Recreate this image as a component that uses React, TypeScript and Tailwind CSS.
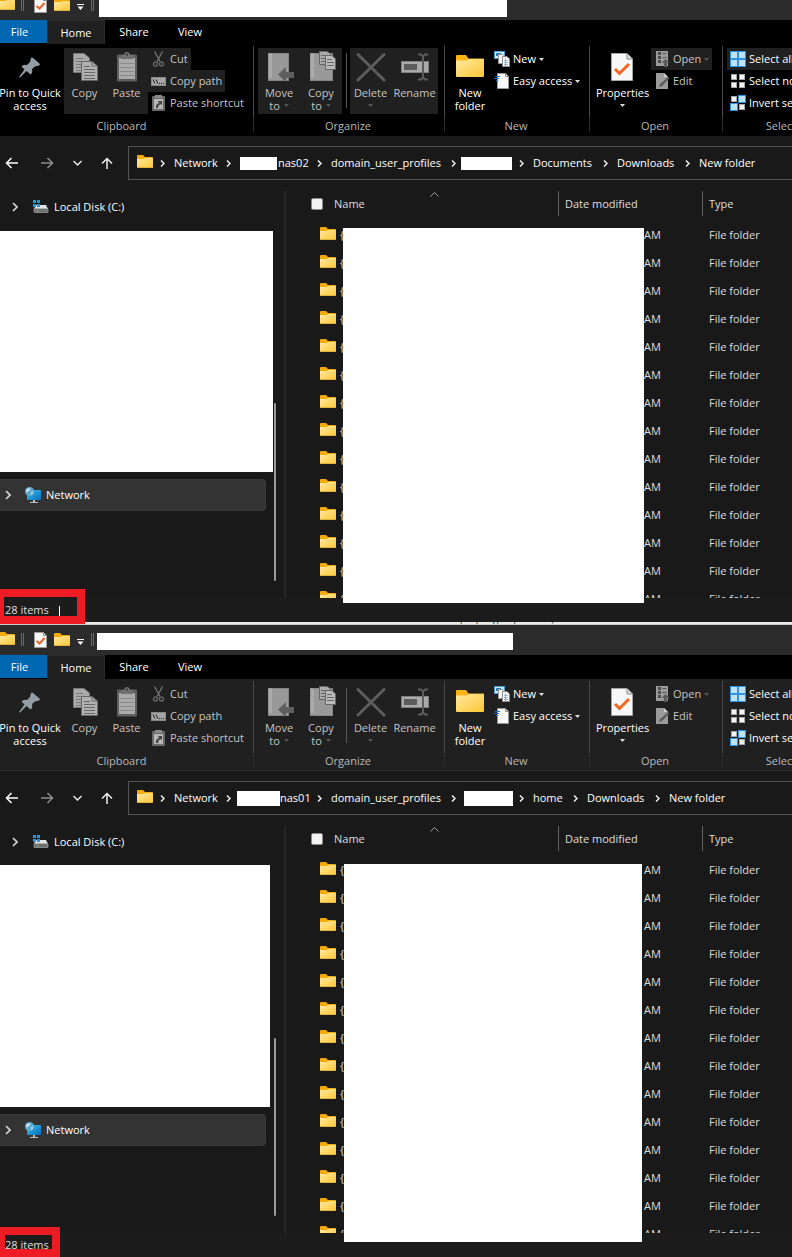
import { ReactNode } from "react";
import clsx from "clsx";

interface Crumb {
  label: string;
  width: string;
  redacted?: string;
}

interface ExplorerProps {
  id: string;
  focused?: boolean;
  titleClass: string;
  titleRedaction: string;
  crumbs: Crumb[];
  sideRedaction: string;
  listRedaction: string;
  statusMark: string;
  showDivider?: boolean;
}

const FolderIcon = ({ className }: { className?: string }) => (
  <svg className={clsx("shrink-0", className)} width="16" height="13" viewBox="0 0 16 13">
    <path d="M0 1Q0 0 1 0H6L8 2H15Q16 2 16 3V7H0Z" fill="#f3ab0c" />
    <path d="M0 4H6.5L8.5 3H16V12Q16 13 15 13H1Q0 13 0 12Z" fill="url(#folderFill)" />
    <path d="M0.5 12.5H15.5" stroke="#e6b13c" />
  </svg>
);

const BigFolderIcon = () => (
  <svg width="32" height="32" viewBox="0 0 32 32">
    <path d="M2 5Q2 4 3 4H12L14.500 7.500H29Q30 7.500 30 8.500V14H2Z" fill="#fab416" />
    <path d="M2 9.500H12L15 8H30V25Q30 26 29 26H3Q2 26 2 25Z" fill="url(#folderFill)" />
  </svg>
);

const PinIcon = () => (
  <svg width="32" height="32" viewBox="0 0 32 32">
    <path
      d="M17 7Q18 6 19 7L25.500 12.500Q26.500 14 25 14.500L21 15.500L18 18Q19 22 16.500 23.500L12.500 20L6 26.500L5 26L10.500 18.500L7.500 15.500Q9.500 13 13 14L16 11Z"
      fill="#929da5"
    />
  </svg>
);

const CopyIcon = () => (
  <svg width="32" height="32" viewBox="0 0 32 32">
    <path d="M4.500 2.500H15L20.500 7V21.500H4.500Z" fill="#aaa" stroke="#777" />
    <path d="M7 7.500H14M7 10.500H17M7 13.500H17M7 16.500H17M7 19.500H15" stroke="#777" />
    <path d="M12.500 10.500H23L28.500 15V29.500H12.500Z" fill="#b0b0b0" stroke="#666" />
    <path d="M23 10.500V15H28.500M15 15.500H21M15 18.500H26M15 21.500H26M15 24.500H26M15 27.500H26" stroke="#666" fill="none" />
  </svg>
);

const PasteIcon = () => (
  <svg width="32" height="32" viewBox="0 0 32 32">
    <rect x="6" y="3.500" width="20" height="27" rx="1" fill="#5f5f5f" />
    <rect x="8" y="7" width="16" height="21" fill="#aaa" />
    <path d="M9 12.500H23M9 16.500H23M9 20.500H23M9 24.500H23" stroke="#8a8a8a" />
    <path d="M10 4H13Q13.500 1 16 1Q18.500 1 19 4H22V8H10Z" fill="#707070" />
    <circle cx="16" cy="3.500" r="1" fill="#333" />
  </svg>
);

const MoveIcon = () => (
  <svg width="32" height="32" viewBox="0 0 32 32">
    <rect x="5.500" y="2.500" width="20" height="27" fill="#999" stroke="#858585" />
    <path d="M5.500 2.500H9V27H5.500Z" fill="#aaa" />
    <path d="M15 23.500L23 16V21H31V27H23V31Z" fill="#5e5e5e" />
  </svg>
);

const CopyToIcon = () => (
  <svg width="32" height="32" viewBox="0 0 32 32">
    <rect x="5.500" y="2.500" width="22" height="27" fill="#999" stroke="#858585" />
    <path d="M5.500 2.500H9V27H5.500Z" fill="#aaa" />
    <path d="M14.500 0.500H22L26 3V13.500H14.500Z" fill="#aaa" stroke="#666" />
    <path d="M16 4.500H22M16 7.500H21M16 10.500H21" stroke="#666" />
    <path d="M20.500 4.500H27L30.500 8V18.500H20.500Z" fill="#bbb" stroke="#666" />
    <path d="M22 8.500H27M22 11.500H29M22 14.500H29" stroke="#666" />
  </svg>
);

const DeleteIcon = () => (
  <svg width="32" height="32" viewBox="0 0 32 32">
    <path d="M3 3.500L29 29M29 3.500L3 29" stroke="#5d5d5d" strokeWidth="3" strokeLinecap="round" />
  </svg>
);

const RenameIcon = () => (
  <svg width="32" height="32" viewBox="0 0 32 32">
    <rect x="2.500" y="10.500" width="27" height="11" fill="#aaa" stroke="#808080" />
    <rect x="5" y="13" width="13" height="6" fill="#5c5c5c" />
    <path d="M19 3.500H22L24 5.500L26 3.500H29M24 5V27M19 28.500H22L24 26.500L26 28.500H29" stroke="#5c5c5c" strokeWidth="2" fill="none" />
  </svg>
);

const PropertiesIcon = () => (
  <svg width="32" height="32" viewBox="0 0 32 32">
    <path d="M4.500 2.500H20L25.500 8V29.500H4.500Z" fill="#f7f7f7" stroke="#a3a3a3" />
    <path d="M20 2.500V8H25.500" fill="#ddd" stroke="#8f8f8f" />
    <path d="M8 18L12.500 22.500L22 13" stroke="#f26522" strokeWidth="3" fill="none" />
  </svg>
);

const CheckedPageIcon = () => (
  <svg className="shrink-0" width="13" height="16" viewBox="0 0 13 16">
    <path d="M0.500 0.500H9.500L12.500 3.500V15.500H0.500Z" fill="#f7f7f7" stroke="#9a9a9a" />
    <path d="M9.500 0.500V3.500H12.500" fill="none" stroke="#888" />
    <path d="M2.500 9L5.500 11.500L10.500 6" stroke="#e8632c" strokeWidth="2" fill="none" />
  </svg>
);

const CutIcon = () => (
  <svg width="16" height="16" viewBox="0 0 16 16">
    <path d="M3.500 0.500L9 10.500M11.500 0.500L6 10.500" stroke="#777" strokeWidth="1.300" />
    <circle cx="4.500" cy="13" r="2" fill="none" stroke="#626262" strokeWidth="1.500" />
    <circle cx="10.500" cy="13" r="2" fill="none" stroke="#626262" strokeWidth="1.500" />
  </svg>
);

const CopyPathIcon = () => (
  <svg width="16" height="16" viewBox="0 0 16 16">
    <rect x="0.500" y="4.500" width="14" height="8" fill="#a5a5a5" stroke="#888" />
    <path d="M2 6.500L4 10.500M5 6.500L7 10.500M8 10.500H9M10 10.500H11M12 10.500H13" stroke="#222" />
  </svg>
);

const PasteShortcutIcon = () => (
  <svg width="16" height="16" viewBox="0 0 16 16">
    <rect x="1" y="1" width="13" height="15" rx="1" fill="#6a6a6a" />
    <rect x="3" y="4" width="9" height="10" fill="#b5b5b5" />
    <rect x="4" y="0" width="7" height="3" fill="#8a8a8a" />
    <path d="M5 13Q4.500 9 8 8L7 6H11V10L9.500 9Q7 10 7 13Z" fill="#444" />
  </svg>
);

const NewItemIcon = () => (
  <svg width="16" height="16" viewBox="0 0 16 16">
    <rect x="0.500" y="0.500" width="10" height="7" fill="#cfe8f7" stroke="#4b9ac9" />
    <rect x="2" y="2" width="5" height="3" fill="#2f7fb5" />
    <path d="M4.500 3.500H9L11.500 6V12.500H4.500Z" fill="#f4f4f4" stroke="#999" />
    <path d="M8.500 5.500H13L15.500 8V15.500H8.500Z" fill="#fff" stroke="#8c8c8c" />
    <path d="M10 9.500H14M10 11.500H14M10 13.500H14" stroke="#9bb7d8" />
    <path d="M11.500 7V15" stroke="#e58f8f" />
  </svg>
);

const EasyAccessIcon = () => (
  <svg width="16" height="16" viewBox="0 0 16 16">
    <path d="M3.500 0.500H11.500L14.500 3.500V15.500H3.500Z" fill="#f7f7f7" stroke="#999" />
    <path d="M11.500 0.500V3.500H14.500" fill="none" stroke="#888" />
    <path d="M1 3.500H6M0 5.500H5M2 7.500H4" stroke="#1c6fb8" strokeWidth="1.200" />
  </svg>
);

const OpenIcon = () => (
  <svg width="16" height="16" viewBox="0 0 16 16">
    <rect x="2" y="0" width="12" height="15" fill="#9b9b9b" />
    <path d="M4 2.500H7M4 6.500H7M4 10.500H7" stroke="#4c4c4c" strokeWidth="3" />
    <path d="M8.500 2.500H12.500M8.500 6.500H12.500" stroke="#555" />
    <path d="M11.500 8L15.500 12H13V16H10V12H7.500Z" fill="#5a5a5a" />
  </svg>
);

const EditIcon = () => (
  <svg width="16" height="16" viewBox="0 0 16 16">
    <path d="M2 0H10L14 4V16H2Z" fill="#9b9b9b" />
    <path d="M10 0V4H14" fill="#ccc" />
    <path d="M5 14L6 11L14 4L15.500 5.500L8 13Z" fill="#5c5c5c" />
  </svg>
);

const SelectIcon = ({ blue }: { blue: boolean[] }) => (
  <svg width="16" height="16" viewBox="0 0 16 16">
    {blue.map((isBlue, i) => {
      const x = (i % 2) * 8;
      const y = Math.floor(i / 2) * 8;
      return isBlue ? (
        <g key={i}>
          <rect x={x} y={y} width="8" height="8" fill="#2f93e0" />
          <rect x={x + 1} y={y + 1} width="6" height="6" fill="#bfe2fb" />
        </g>
      ) : (
        <rect key={i} x={x + 1.5} y={y + 1.5} width="5" height="5" fill="#f4f4f4" stroke="#a8a8a8" />
      );
    })}
  </svg>
);

const DiskIcon = () => (
  <svg className="shrink-0" width="16" height="14" viewBox="0 0 16 14">
    <path d="M3 5H13L15 9H1Z" fill="#e4e4e4" />
    <rect x="1" y="8.500" width="14" height="4" rx="0.500" fill="#6e6e6e" stroke="#b5b5b5" strokeWidth="0.600" />
    <rect x="4" y="10" width="1.500" height="1.500" fill="#3ce25a" />
    <path d="M0 0H3V3H0ZM4 0H7V3H4ZM0 4H3V7H0ZM4 4H7V7H4Z" fill="#1c9ae6" />
  </svg>
);

const NetworkIcon = () => (
  <svg className="shrink-0" width="16" height="16" viewBox="0 0 16 16">
    <rect x="2" y="3" width="14" height="10" rx="0.500" fill="url(#screenFill)" />
    <path d="M8 13H10V15H13V16H5V15H8Z" fill="#b9c0c5" />
    <circle cx="4.500" cy="4.500" r="4.500" fill="#5fa9d0" />
    <path d="M1 3Q3 0.500 5 1.500Q6 3 3.500 4Q3 6 1.500 5Z" fill="#c6e2ef" />
    <path d="M6 5Q8.500 4 8.500 5Q8 8 6 8Z" fill="#a9d1e6" />
  </svg>
);

const Chevron = () => (
  <svg className="shrink-0" width="6" height="10" viewBox="0 0 6 10">
    <path d="M1 1L5 5L1 9" stroke="#d8d8d8" strokeWidth="1.600" fill="none" />
  </svg>
);

const CrumbChevron = () => (
  <svg className="shrink-0" width="5" height="7" viewBox="0 0 5 7">
    <path d="M1 0.500L4 3.500L1 6.500" stroke="#eee" strokeWidth="1.500" fill="none" />
  </svg>
);

const Caret = ({ dim }: { dim?: boolean }) => (
  <svg className="shrink-0" width="5" height="3" viewBox="0 0 5 3">
    <path d="M0 0H5L2.500 3Z" fill={dim ? "#555" : "#e0e0e0"} />
  </svg>
);

interface BigButtonProps {
  icon: ReactNode;
  width: string;
  disabled?: boolean;
  children: ReactNode;
}

const BigButton = ({ icon, width, disabled, children }: BigButtonProps) => (
  <button
    disabled={disabled}
    className={clsx(
      "flex h-[66px] shrink-0 flex-col items-center gap-[3px] pt-[3px] text-center leading-[13px] whitespace-nowrap",
      width,
      disabled ? "bg-[#202020] text-[#c4c4c4]" : "text-white"
    )}
  >
    {icon}
    <span className="flex flex-col items-center">{children}</span>
  </button>
);

interface SmallButtonProps {
  icon: ReactNode;
  label: string;
  disabled?: boolean;
  highlighted?: boolean;
  caret?: boolean;
}

const SmallButton = ({ icon, label, disabled, highlighted, caret }: SmallButtonProps) => (
  <button
    disabled={disabled}
    className={clsx(
      "flex h-[22px] items-center gap-[3px] px-[3px] whitespace-nowrap",
      highlighted && "bg-[#202020]",
      disabled ? "text-[#c4c4c4]" : "text-white"
    )}
  >
    {icon}
    <span>{label}</span>
    {caret && <Caret dim={disabled} />}
  </button>
);

const RibbonGroup = ({ label, width, children }: { label: string; width: string; children: ReactNode }) => (
  <div className={clsx("flex shrink-0 flex-col", width)}>
    <div className="flex h-[68px] items-start pt-[2px]">{children}</div>
    <p className="mt-[5px] text-center leading-[14px] text-[#b8b8b8]">{label}</p>
  </div>
);

const GroupLine = () => (
  <div className="flex w-px shrink-0 flex-col">
    <div className="h-[72px] bg-[#484848]" />
    <div className="h-[14px] bg-[#2c2c2c]" />
  </div>
);

const Ribbon = ({ focused }: { focused?: boolean }) => (
  <div
    className={clsx(
      "flex h-[92px] overflow-hidden border-b pt-[2px]",
      focused ? "border-black bg-black" : "border-[#2b2b2b] bg-[#202020]"
    )}
  >
    <RibbonGroup label="Clipboard" width="w-[253px] pr-[10px]">
      <BigButton icon={<PinIcon />} width="-ml-1 w-[68px]">
        <span>Pin to Quick</span>
        <span>access</span>
      </BigButton>
      <BigButton icon={<CopyIcon />} width="w-[41px]" disabled>
        Copy
      </BigButton>
      <BigButton icon={<PasteIcon />} width="w-[43px]" disabled>
        Paste
      </BigButton>
      <div className="flex flex-col items-start">
        <SmallButton icon={<CutIcon />} label="Cut" disabled highlighted />
        <SmallButton icon={<CopyPathIcon />} label="Copy path" disabled highlighted />
        <SmallButton icon={<PasteShortcutIcon />} label="Paste shortcut" disabled />
      </div>
    </RibbonGroup>
    <GroupLine />
    <RibbonGroup label="Organize" width="w-[190px] pl-1 pr-[6px]">
      <BigButton icon={<MoveIcon />} width="w-[42px]" disabled>
        <span>Move</span>
        <span className="flex items-center gap-1">
          to <Caret dim />
        </span>
      </BigButton>
      <BigButton icon={<CopyToIcon />} width="w-[42px]" disabled>
        <span>Copy</span>
        <span className="flex items-center gap-1">
          to <Caret dim />
        </span>
      </BigButton>
      <div className="mr-[3px] ml-1 mt-[5px] h-[55px] w-px shrink-0 bg-[#5a5a5a]" />
      <BigButton icon={<DeleteIcon />} width="w-[41px]" disabled>
        <span>Delete</span>
        <span className="flex h-[13px] items-center">
          <Caret dim />
        </span>
      </BigButton>
      <BigButton icon={<RenameIcon />} width="w-[47px]" disabled>
        Rename
      </BigButton>
    </RibbonGroup>
    <GroupLine />
    <RibbonGroup label="New" width="w-[144px] pl-1 pr-[6px]">
      <BigButton icon={<BigFolderIcon />} width="w-[42px]">
        <span>New</span>
        <span>folder</span>
      </BigButton>
      <div className="flex flex-col items-start">
        <SmallButton icon={<NewItemIcon />} label="New" caret />
        <SmallButton icon={<EasyAccessIcon />} label="Easy access" caret />
      </div>
    </RibbonGroup>
    <GroupLine />
    <RibbonGroup label="Open" width="w-[132px] pl-1 pr-[6px]">
      <BigButton icon={<PropertiesIcon />} width="w-[57px]">
        <span>Properties</span>
        <span className="flex h-[13px] items-center">
          <Caret />
        </span>
      </BigButton>
      <div className="flex flex-col items-start">
        <SmallButton icon={<OpenIcon />} label="Open" disabled highlighted caret />
        <SmallButton icon={<EditIcon />} label="Edit" disabled />
      </div>
    </RibbonGroup>
    <GroupLine />
    <RibbonGroup label="Select" width="w-[116px] px-1">
      <div className="flex flex-col items-start">
        <SmallButton icon={<SelectIcon blue={[true, true, true, true]} />} label="Select all" highlighted />
        <SmallButton icon={<SelectIcon blue={[false, false, false, false]} />} label="Select none" />
        <SmallButton icon={<SelectIcon blue={[false, true, true, false]} />} label="Invert selection" />
      </div>
    </RibbonGroup>
  </div>
);

const ToolbarGrip = () => <div className="mb-[2px] h-[13px] w-[3px] shrink-0 border-x border-[#6a6a6a]" />;

const TitleBar = ({ titleClass, titleRedaction }: { titleClass: string; titleRedaction: string }) => (
  <div className={clsx("relative flex items-end overflow-hidden bg-[#2b2b2b] pb-[7px]", titleClass)}>
    <FolderIcon className="mb-[3px] -ml-px" />
    <div className="ml-[6px]">
      <ToolbarGrip />
    </div>
    <button aria-label="Properties" className="ml-[10px]">
      <CheckedPageIcon />
    </button>
    <button aria-label="New folder" className="mb-[2px] ml-[7px]">
      <FolderIcon />
    </button>
    <button aria-label="Customize toolbar" className="mb-[3px] ml-[7px]">
      <svg width="7" height="6" viewBox="0 0 7 6">
        <path d="M0 0.500H7" stroke="#fff" />
        <path d="M0.500 2.500H6.500L3.500 6Z" fill="#fff" />
      </svg>
    </button>
    <div className="ml-[7px]">
      <ToolbarGrip />
    </div>
    <div className={clsx("absolute bg-white", titleRedaction)} />
  </div>
);

const TabStrip = () => (
  <div className="flex h-6 bg-black text-white">
    <button className="mb-px w-[47px] bg-[#0067b3] pr-2">File</button>
    <button className="w-[58px] border-x border-t border-[#2b2b2b] bg-[#202020]">Home</button>
    <button className="w-[58px]">Share</button>
    <button className="w-[54px]">View</button>
  </div>
);

const NavBar = ({ crumbs }: { crumbs: Crumb[] }) => (
  <div className="flex h-[55px] items-start pt-[10px]">
    <div className="flex h-[34px] w-32 shrink-0 items-center pl-[5px]">
      <button aria-label="Back">
        <svg width="14" height="12" viewBox="0 0 14 12">
          <path d="M13 6H1.500M6.500 1L1.500 6L6.500 11" stroke="#fff" strokeWidth="1.500" fill="none" />
        </svg>
      </button>
      <button aria-label="Forward" className="ml-[21px]">
        <svg width="14" height="12" viewBox="0 0 14 12">
          <path d="M1 6H12.500M7.500 1L12.500 6L7.500 11" stroke="#8f8f8f" strokeWidth="1.500" fill="none" />
        </svg>
      </button>
      <button aria-label="Recent locations" className="ml-[19px]">
        <svg width="9" height="6" viewBox="0 0 9 6">
          <path d="M0.500 1L4.500 5L8.500 1" stroke="#e8e8e8" strokeWidth="1.500" fill="none" />
        </svg>
      </button>
      <button aria-label="Up" className="ml-[19px]">
        <svg width="12" height="12" viewBox="0 0 12 12">
          <path d="M6 12V1.500M1 6.500L6 1.500L11 6.500" stroke="#f0f0f0" strokeWidth="1.500" fill="none" />
        </svg>
      </button>
    </div>
    <nav
      aria-label="Address"
      className="flex h-[34px] min-w-0 flex-auto items-center overflow-hidden border border-r-0 border-[#535353] pl-2 text-white"
    >
      <FolderIcon className="mb-[3px]" />
      {crumbs.map((crumb, index) => (
        <div key={index} className={clsx("flex shrink-0 items-center whitespace-nowrap", crumb.width)}>
          <span className="w-[21px] shrink-0 pl-[7px]">
            <CrumbChevron />
          </span>
          {crumb.redacted && <span className={clsx("shrink-0 bg-white", crumb.redacted)} />}
          {crumb.label && <a href="#">{crumb.label}</a>}
        </div>
      ))}
    </nav>
  </div>
);

const Sidebar = ({ redaction }: { redaction: string }) => (
  <aside className="relative flex w-[286px] shrink-0 flex-col border-r-2 border-[#282828] text-white">
    <a href="#" className="flex h-8 items-center pl-3">
      <Chevron />
      <span className="ml-[15px]">
        <DiskIcon />
      </span>
      <span className="ml-[5px]">Local Disk (C:)</span>
    </a>
    <div className={clsx("bg-white", redaction)} />
    <a href="#" className="mt-[7px] flex h-8 w-[266px] items-center rounded-r-sm border border-l-0 border-[#3a3a3a] bg-[#333] pl-[5px]">
      <Chevron />
      <span className="ml-[14px]">
        <NetworkIcon />
      </span>
      <span className="ml-[5px]">Network</span>
    </a>
    <div className="absolute top-[212px] right-[8px] h-[178px] w-[2px] rounded-full bg-[#9a9a9a]" />
  </aside>
);

const FileList = ({ id }: { id: string }) => (
  <div className="relative min-w-0 flex-auto overflow-hidden text-[#dedede]">
    <table className="w-full table-fixed border-separate border-spacing-0 text-left">
      <thead>
        <tr className="h-[25px]">
          <th className="w-[273px] border-r border-[#636363] p-0 font-normal">
            <div className="relative flex items-center pl-[25px]">
              <input
                type="checkbox"
                id={`${id}-all`}
                aria-label="Select all items"
                className="h-3 w-3 appearance-none rounded-xs border border-[#8a8a8a] bg-[#f3f3f3]"
              />
              <label htmlFor={`${id}-all`} className="ml-[11px]">
                Name
              </label>
              <svg className="absolute -top-[4px] left-[144px]" width="9" height="5" viewBox="0 0 9 5">
                <path d="M0.500 4.500L4.500 0.500L8.500 4.500" stroke="#a0a0a0" fill="none" />
              </svg>
            </div>
          </th>
          <th className="w-[144px] border-r border-[#636363] p-0 pl-[6px] font-normal">Date modified</th>
          <th className="p-0 pl-[6px] font-normal">Type</th>
        </tr>
      </thead>
      <tbody>
        <tr className="h-[5px]" />
        {Array.from({ length: 14 }, (_, index) => (
          <tr key={index} className="h-7">
            <td className="p-0 pl-[34px]">
              <span className="flex items-center gap-1">
                <FolderIcon className="mb-[3px]" />
                {"{"}
              </span>
            </td>
            <td className="p-0 pl-[85px]">AM</td>
            <td className="p-0 pl-[6px]">File folder</td>
          </tr>
        ))}
      </tbody>
    </table>
  </div>
);

const ExplorerWindow = (props: ExplorerProps) => {
  return (
    <section className="relative bg-[#191919]">
      <TitleBar titleClass={props.titleClass} titleRedaction={props.titleRedaction} />
      <TabStrip />
      <Ribbon focused={props.focused} />
      <NavBar crumbs={props.crumbs} />
      <div className="relative z-10">
        <div className="flex h-[407px] overflow-hidden">
          <Sidebar redaction={props.sideRedaction} />
          <FileList id={props.id} />
        </div>
        <div className={clsx("absolute bg-white", props.listRedaction)} />
      </div>
      <footer className="relative flex h-6 items-center bg-[#1c1c1c] pl-[5px] text-[#dedede]">
        28 items
        {props.showDivider && <span className="mt-1 ml-[10px] h-3 w-px bg-white" />}
        <div className={clsx("absolute z-20 border-8 border-[#ed1c24]", props.statusMark)} />
      </footer>
    </section>
  );
};

const App = () => {
  return (
    <main className="min-h-screen overflow-hidden bg-[#191919] font-['Open_Sans','Noto_Sans',sans-serif] text-[11px] leading-4">
      <svg className="absolute h-0 w-0" aria-hidden="true">
        <defs>
          <linearGradient id="folderFill" x1="0" y1="0" x2="1" y2="1">
            <stop offset="0" stopColor="#ffe9a0" />
            <stop offset="1" stopColor="#fdc735" />
          </linearGradient>
          <linearGradient id="screenFill" x1="0" y1="0" x2="1" y2="1">
            <stop offset="0" stopColor="#2fc3ea" />
            <stop offset="1" stopColor="#0f6cbd" />
          </linearGradient>
        </defs>
      </svg>
      <ExplorerWindow
        id="nas02"
        focused
        titleClass="h-5"
        titleRedaction="top-0 bottom-[3px] left-[99px] w-[408px]"
        crumbs={[
          { label: "Network", width: "w-[66px]" },
          { label: "nas02", width: "w-[91px]", redacted: "mr-px h-[13px] w-[37px]" },
          { label: "domain_user_profiles", width: "w-[134px]" },
          { label: "", width: "w-[68px]", redacted: "-ml-1 h-[13px] w-[51px]" },
          { label: "Documents", width: "w-[84px]" },
          { label: "Downloads", width: "w-[82px]" },
          { label: "New folder", width: "w-[90px]" },
        ]}
        sideRedaction="mt-2 h-[241px] w-[273px]"
        listRedaction="top-[37px] -bottom-[5px] left-[343px] w-[301px]"
        statusMark="-top-[9px] -bottom-[2px] -left-1 w-[89px]"
        showDivider
      />
      {/* sliver of the window behind */}
      <div className="flex h-[3px] items-end overflow-hidden border-b border-[#c8c8c8] bg-[#ececec] pb-px pl-[410px] text-[10px] leading-[9px] whitespace-nowrap text-[#333]">
        <span className="w-[200px] shrink-0">Domain Laptop logon policies (Premium</span>
        <span className="w-[147px] shrink-0">Enabled</span>
        <span>None</span>
      </div>
      <ExplorerWindow
        id="nas01"
        titleClass="h-[30px]"
        titleRedaction="top-2 bottom-[5px] left-[97px] w-[416px]"
        crumbs={[
          { label: "Network", width: "w-[66px]" },
          { label: "nas01", width: "w-[91px]", redacted: "-ml-[3px] h-[15px] w-[43px]" },
          { label: "domain_user_profiles", width: "w-[134px]" },
          { label: "", width: "w-[68px]", redacted: "-ml-px h-[15px] w-[49px]" },
          { label: "home", width: "w-[54px]" },
          { label: "Downloads", width: "w-[82px]" },
          { label: "New folder", width: "w-[90px]" },
        ]}
        sideRedaction="mt-[7px] h-[242px] w-[270px]"
        listRedaction="top-[38px] -bottom-[9px] left-[344px] w-[298px]"
        statusMark="-top-[6px] bottom-0 -left-[3px] w-[63px]"
      />
    </main>
  );
};

export default App;
